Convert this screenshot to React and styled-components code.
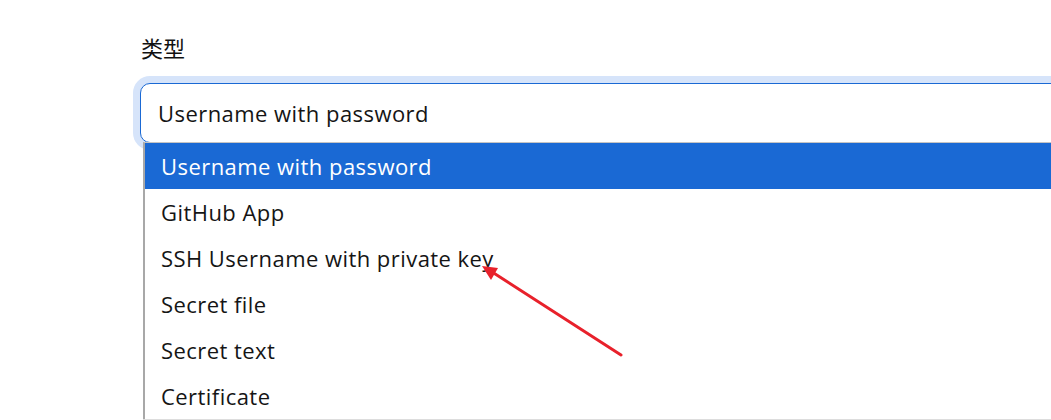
import React from "react";
import styled, { createGlobalStyle } from "styled-components";

const Global = createGlobalStyle`
  html, body { margin: 0; padding: 0; background: #fff; }
  body { width: 1051px; height: 420px; overflow: hidden; }
`;

const Page = styled.div`
  position: relative;
  width: 1051px;
  height: 420px;
  overflow: hidden;
  font-family: "Open Sans", "Liberation Sans", "Noto Sans CJK SC", sans-serif;
  color: #151515;
`;

const Field = styled.div`
  position: relative;
  margin-left: 140px;
  padding-top: 33px;
  width: 1000px;
`;

const Label = styled.div`
  font-family: "Noto Sans CJK SC", sans-serif;
  font-size: 22px;
  font-weight: 400;
  line-height: 28px;
  margin-left: 1px;
  color: #111;
`;

const Select = styled.div`
  position: relative;
  margin-top: 22px;
  height: 58px;
  border: 1px solid #1a69d4;
  border-radius: 10px;
  box-shadow: 0 0 0 7px #d6e4fa;
  display: flex;
  align-items: center;
  padding-left: 17px;
  font-size: 22px;
  letter-spacing: 0.45px;
  background: #fff;
`;

const Menu = styled.ul`
  position: absolute;
  left: 2px;
  top: 58px;
  width: 1000px;
  margin: 0;
  padding: 0;
  list-style: none;
  background: #fff;
  border-top: 1px solid #c4c4c4;
  border-left: 2px solid #a8a8a8;
  box-shadow: 0 1px 0 #ddd;
`;

const Option = styled.li`
  height: 46px;
  display: flex;
  align-items: center;
  padding-left: 16px;
  font-size: 22px;
  letter-spacing: 0.45px;
  background: ${(p) => (p.$active ? "#1a69d4" : "#fff")};
  color: ${(p) => (p.$active ? "#fff" : "#151515")};
`;

const Arrow = styled.svg`
  position: absolute;
  left: 0;
  top: 0;
  pointer-events: none;
`;

const options = [
  "Username with password",
  "GitHub App",
  "SSH Username with private key",
  "Secret file",
  "Secret text",
  "Certificate",
];

export default function App() {
  return (
    <Page>
      <Global />
      <Field>
        <Label>类型</Label>
        <Select>
          Username with password
          <Menu>
            {options.map((o, i) => (
              <Option key={o} $active={i === 0}>
                {o}
              </Option>
            ))}
          </Menu>
        </Select>
      </Field>
      <Arrow width="1051" height="420" viewBox="0 0 1051 420">
        <line x1="621" y1="355" x2="489" y2="270" stroke="#e8212b" strokeWidth="3" strokeLinecap="round" />
        <polygon points="482,266 498,268 491,280" fill="#e8212b" />
      </Arrow>
    </Page>
  );
}
